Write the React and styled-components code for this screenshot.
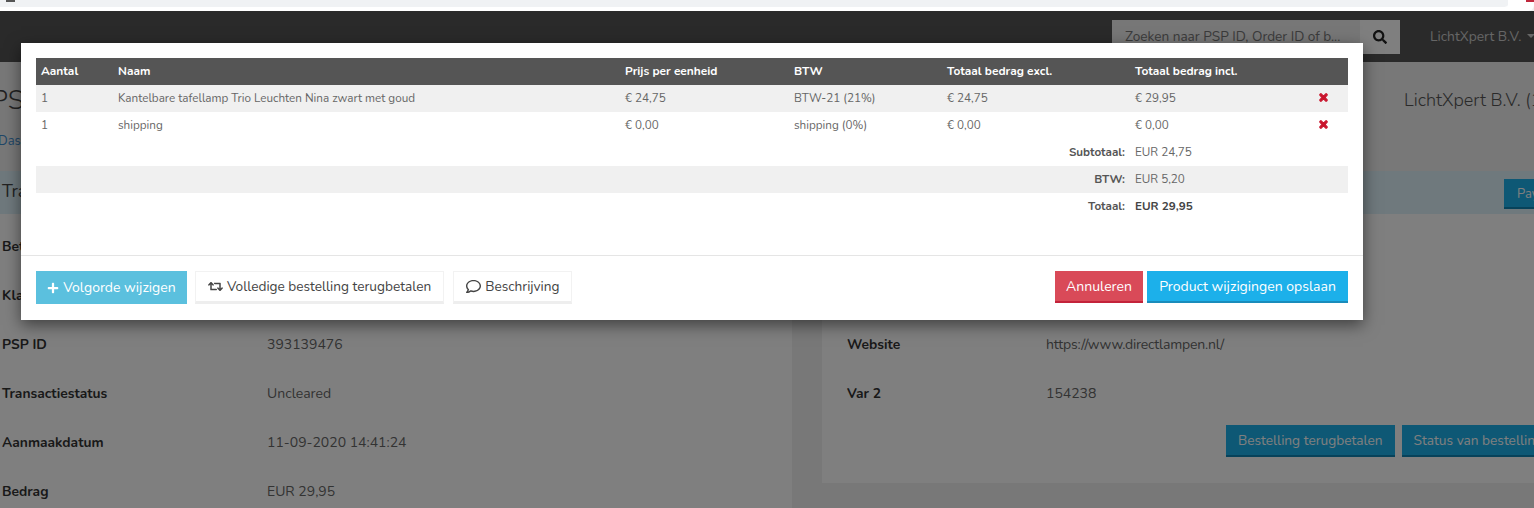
import React from "react";
import styled, { createGlobalStyle } from "styled-components";
import { FaPlus, FaRetweet, FaRegComment, FaTimes, FaSearch } from "react-icons/fa";

const items = [
  { qty: "1", name: "Kantelbare tafellamp Trio Leuchten Nina zwart met goud", price: "€ 24,75", vat: "BTW-21 (21%)", excl: "€ 24,75", incl: "€ 29,95" },
  { qty: "1", name: "shipping", price: "€ 0,00", vat: "shipping (0%)", excl: "€ 0,00", incl: "€ 0,00" },
];

const totals = [
  { label: "Subtotaal:", value: "EUR 24,75" },
  { label: "BTW:", value: "EUR 5,20", shaded: true },
  { label: "Totaal:", value: "EUR 29,95", strong: true },
];

const App = () => {
  return (
    <Page>
      <GlobalStyle />
      <BrowserStrip />
      <Navbar>
        <SearchBox>
          <SearchInput>Zoeken naar PSP ID, Order ID of b...</SearchInput>
          <SearchButton>
            <FaSearch />
          </SearchButton>
        </SearchBox>
        <Account>
          LichtXpert B.V.
          <Caret />
        </Account>
      </Navbar>
      <PageHead>
        <div>
          <Title>PSP</Title>
          <Crumb>Dashboard</Crumb>
        </div>
        <Merchant>LichtXpert B.V. (1</Merchant>
      </PageHead>
      <Columns>
        <LeftPanel>
          <PanelHead>Transactie</PanelHead>
          <LeftBody>
            <InfoRow><InfoLabel $wide>Betaalmethode</InfoLabel></InfoRow>
            <InfoRow><InfoLabel $wide>Klant</InfoLabel></InfoRow>
            <InfoRow><InfoLabel $wide>PSP ID</InfoLabel><InfoValue>393139476</InfoValue></InfoRow>
            <InfoRow><InfoLabel $wide>Transactiestatus</InfoLabel><InfoValue>Uncleared</InfoValue></InfoRow>
            <InfoRow><InfoLabel $wide>Aanmaakdatum</InfoLabel><InfoValue>11-09-2020 14:41:24</InfoValue></InfoRow>
            <InfoRow><InfoLabel $wide>Bedrag</InfoLabel><InfoValue>EUR 29,95</InfoValue></InfoRow>
          </LeftBody>
        </LeftPanel>
        <RightPanel>
          <PanelHead>
            <span />
            <PanelButton>Payment</PanelButton>
          </PanelHead>
          <RightBody>
            <InfoRow><InfoLabel>Website</InfoLabel><InfoValue $tight>https://www.directlampen.nl/</InfoValue></InfoRow>
            <InfoRow><InfoLabel>Var 2</InfoLabel><InfoValue>154238</InfoValue></InfoRow>
            <PanelActions>
              <DimButton>Bestelling terugbetalen</DimButton>
              <DimButton>Status van bestelling</DimButton>
            </PanelActions>
          </RightBody>
        </RightPanel>
      </Columns>
      <Backdrop />
      <Modal>
        <ModalBody>
          <HeadRow>
            <Cell>Aantal</Cell>
            <Cell>Naam</Cell>
            <Cell>Prijs per eenheid</Cell>
            <Cell>BTW</Cell>
            <Cell>Totaal bedrag excl.</Cell>
            <Cell>Totaal bedrag incl.</Cell>
          </HeadRow>
          {items.map((item, i) => (
            <Row key={item.name} $shaded={i === 0}>
              <Cell>{item.qty}</Cell>
              <Cell>{item.name}</Cell>
              <Cell>{item.price}</Cell>
              <Cell>{item.vat}</Cell>
              <Cell>{item.excl}</Cell>
              <LastCell>
                {item.incl}
                <Remove>
                  <FaTimes />
                </Remove>
              </LastCell>
            </Row>
          ))}
          {totals.map((t) => (
            <TotalRow key={t.label} $shaded={t.shaded}>
              <TotalLabel>{t.label}</TotalLabel>
              <TotalValue $strong={t.strong}>{t.value}</TotalValue>
            </TotalRow>
          ))}
        </ModalBody>
        <ModalFooter>
          <InfoButton>
            <FaPlus />
            Volgorde wijzigen
          </InfoButton>
          <LightButton>
            <FaRetweet />
            Volledige bestelling terugbetalen
          </LightButton>
          <LightButton>
            <FaRegComment />
            Beschrijving
          </LightButton>
          <FooterSpacer />
          <DangerButton>Annuleren</DangerButton>
          <PrimaryButton>Product wijzigingen opslaan</PrimaryButton>
        </ModalFooter>
      </Modal>
    </Page>
  );
};
export default App;

const GlobalStyle = createGlobalStyle`
  html, body {
    margin: 0;
    padding: 0;
    overflow: hidden;
  }
  body {
    font-family: "Nunito", "Lato", "Liberation Sans", sans-serif;
  }
`;
const Page = styled.div`
  position: relative;
  width: 1534px;
  height: 508px;
  overflow: hidden;
  background-color: #f0f0f0;
  color: #666;
`;
const BrowserStrip = styled.div`
  position: relative;
  height: 7px;
  margin-right: 26px;
  border-bottom-right-radius: 6px;
  background-color: #f0f2f4;
  box-shadow: 26px 0 0 #fff;
  border-bottom: 4px solid #fff;
  &::before {
    content: "";
    position: absolute;
    left: 6px;
    top: 0;
    width: 9px;
    height: 2px;
    background-color: #555;
  }
  &::after {
    content: "";
    position: absolute;
    right: -26px;
    top: 0;
    width: 8px;
    height: 2px;
    background-color: #c0283c;
  }
`;
const Navbar = styled.div`
  height: 51px;
  box-sizing: border-box;
  padding: 9px 0 0 1112px;
  display: flex;
  align-items: flex-start;
  background-color: #555;
`;
const SearchBox = styled.div`
  display: flex;
  height: 34px;
`;
const SearchInput = styled.div`
  width: 248px;
  box-sizing: border-box;
  padding: 7px 0 0 13px;
  background-color: #eee;
  color: #777;
  font-size: 13.6px;
  white-space: nowrap;
`;
const SearchButton = styled.div`
  width: 40px;
  display: flex;
  justify-content: center;
  align-items: center;
  background-color: #fff;
  color: #222;
  font-size: 14px;
`;
const Account = styled.div`
  margin-left: 30px;
  width: 104px;
  height: 32px;
  flex: none;
  display: flex;
  align-items: center;
  color: #ccc;
  font-size: 13.8px;
  white-space: nowrap;
`;
const Caret = styled.span`
  margin-left: 6px;
  border-top: 4px solid #ccc;
  border-left: 4px solid transparent;
  border-right: 4px solid transparent;
`;
const PageHead = styled.div`
  height: 109px;
  box-sizing: border-box;
  padding: 22px 0 0 0;
  display: flex;
  justify-content: space-between;
`;
const Title = styled.div`
  margin-left: -9px;
  color: #444;
  font-size: 27px;
  font-weight: 300;
  line-height: 34px;
`;
const Crumb = styled.div`
  margin: 14px 0 0 -2px;
  color: #3f8fd0;
  font-size: 13px;
`;
const Merchant = styled.div`
  width: 130px;
  margin-top: 4px;
  color: #555;
  font-size: 18px;
  font-weight: 300;
  white-space: nowrap;
`;
const Columns = styled.div`
  display: flex;
  gap: 30px;
  align-items: flex-start;
`;
const LeftPanel = styled.div`
  width: 792px;
  flex: none;
  background-color: #fff;
`;
const RightPanel = styled.div`
  width: 742px;
  flex: none;
  background-color: #fff;
`;
const PanelHead = styled.div`
  height: 43px;
  box-sizing: border-box;
  padding: 8px 0 0 2px;
  display: flex;
  justify-content: space-between;
  background-color: #dff3fb;
  color: #444;
  font-size: 18px;
`;
const PanelButton = styled.div`
  width: 60px;
  height: 30px;
  box-sizing: border-box;
  padding: 6px 0 0 13px;
  background-color: #1cb0ea;
  border-bottom: 2px solid #0f85b5;
  color: #fff;
  font-size: 13px;
`;
const LeftBody = styled.div`
  padding-top: 8px;
  height: 300px;
`;
const RightBody = styled.div`
  height: 269px;
  padding: 106px 0 0 23px;
  box-sizing: border-box;
`;
const InfoRow = styled.div`
  height: 49px;
  display: flex;
  align-items: center;
  padding-left: 2px;
  font-size: 14px;
`;
const InfoLabel = styled.div`
  width: ${(p) => (p.$wide ? "265px" : "199px")};
  flex: none;
  color: #333;
  font-size: 13.8px;
  font-weight: 700;
`;
const InfoValue = styled.div`
  color: #666;
  letter-spacing: ${(p) => (p.$tight ? "-0.2px" : "0")};
`;
const PanelActions = styled.div`
  display: flex;
  gap: 7px;
  margin: 7px 0 0 381px;
`;
const DimButton = styled.div`
  height: 32px;
  box-sizing: border-box;
  padding: 0 12px;
  display: flex;
  align-items: center;
  flex: none;
  background-color: #1cb0ea;
  border-bottom: 2px solid #0f85b5;
  color: #fff;
  font-size: 13.7px;
  white-space: nowrap;
`;
const Backdrop = styled.div`
  position: absolute;
  inset: 11px 0 0 0;
  background-color: rgba(0, 0, 0, 0.5);
`;
const Modal = styled.div`
  position: absolute;
  left: 21px;
  top: 43px;
  width: 1342px;
  height: 277px;
  background-color: #fff;
  box-shadow: 0 5px 15px rgba(0, 0, 0, 0.5);
`;
const ModalBody = styled.div`
  height: 213px;
  box-sizing: border-box;
  padding: 15px 15px 0;
  border-bottom: 1px solid #e5e5e5;
  font-size: 11.7px;
`;
const Row = styled.div`
  height: 27px;
  box-sizing: border-box;
  padding-bottom: 2px;
  display: grid;
  grid-template-columns: 77px 507px 169px 153px 188px 1fr;
  align-items: center;
  background-color: ${(p) => (p.$shaded ? "#f0f0f0" : "#fff")};
  color: #666;
`;
const HeadRow = styled(Row)`
  background-color: #555;
  color: #fff;
  font-size: 11.9px;
  font-weight: 700;
`;
const Cell = styled.div`
  padding-left: 5px;
  white-space: nowrap;
`;
const LastCell = styled(Cell)`
  display: flex;
  justify-content: space-between;
  align-items: center;
  padding-right: 19px;
`;
const Remove = styled.span`
  display: flex;
  color: #c9142c;
  font-size: 11px;
  svg {
    stroke: currentColor;
    stroke-width: 50;
  }
`;
const TotalRow = styled.div`
  height: 27px;
  box-sizing: border-box;
  padding-bottom: 2px;
  display: flex;
  align-items: center;
  background-color: ${(p) => (p.$shaded ? "#f0f0f0" : "#fff")};
`;
const TotalLabel = styled.div`
  width: 1089px;
  flex: none;
  text-align: right;
  color: #555;
  font-weight: 700;
`;
const TotalValue = styled.div`
  margin-left: 10px;
  color: ${(p) => (p.$strong ? "#444" : "#666")};
  font-weight: ${(p) => (p.$strong ? 700 : 400)};
`;
const ModalFooter = styled.div`
  padding: 15px 15px 0;
  display: flex;
  align-items: flex-start;
`;
const FooterSpacer = styled.div`
  flex: 1;
`;
const BaseButton = styled.div`
  height: 33px;
  box-sizing: border-box;
  display: flex;
  justify-content: center;
  align-items: center;
  gap: 4px;
  font-size: 14px;
  white-space: nowrap;
`;
const InfoButton = styled(BaseButton)`
  width: 151px;
  background-color: #5bc0de;
  color: #fff;
  margin-right: 8px;
  svg {
    font-size: 12px;
  }
`;
const LightButton = styled(BaseButton)`
  padding: 0 12px;
  background-color: #fff;
  border: 1px solid #f2f2f2;
  border-bottom: 3px solid #eee;
  color: #444;
  font-size: 13.65px;
  margin-right: 9px;
  svg {
    font-size: 15px;
  }
`;
const DangerButton = styled(BaseButton)`
  width: 88px;
  height: 32px;
  background-color: #d94a58;
  border-bottom: 2px solid #c3233a;
  color: #fff;
  margin-right: 4px;
`;
const PrimaryButton = styled(BaseButton)`
  width: 201px;
  height: 32px;
  background-color: #1cb0ea;
  border-bottom: 2px solid #1a8cbb;
  color: #fff;
`;
